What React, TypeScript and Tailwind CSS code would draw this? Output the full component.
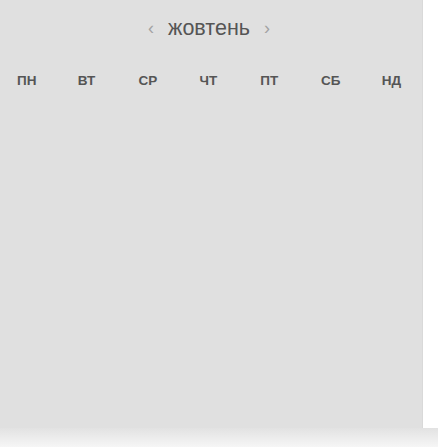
const days = ["пн", "вт", "ср", "чт", "пт", "сб", "нд"];

export default function App() {
  return (
    <div className="w-[438px] h-[447px] bg-white overflow-hidden font-['Liberation_Sans',Arial,sans-serif]">
      {/* calendar panel */}
      <div className="w-[423px] h-[428px] bg-[#e0e0e0] border-r border-[#d9d9d9]">
        <div className="flex items-center justify-center h-[58px] pr-[4px]">
          <span className="text-[18px] text-[#a3a3a3] leading-none -translate-y-[1px]">‹</span>
          <span className="mx-[14px] text-[21.5px] text-[#555] leading-none">жовтень</span>
          <span className="text-[18px] text-[#a3a3a3] leading-none -translate-y-[1px]">›</span>
        </div>
        <div className="grid grid-cols-[repeat(7,60.8px)] pl-[17px] pt-[16px]">
          {days.map((d) => (
            <div key={d} className="text-[13.5px] font-bold uppercase text-[#555] leading-none">
              {d}
            </div>
          ))}
        </div>
      </div>
      {/* bottom strip with shadow */}
      <div className="h-[19px] w-full bg-gradient-to-b from-[#e2e2e2] to-[#f6f6f6]" />
    </div>
  );
}
